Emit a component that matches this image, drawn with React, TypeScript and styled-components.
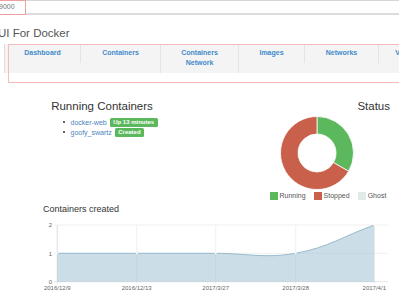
import * as React from 'react';
import styled, { createGlobalStyle } from 'styled-components';

const GlobalStyle = createGlobalStyle`
  html, body {
    margin: 0;
    padding: 0;
    background: #ffffff;
  }
  body {
    font-family: 'Liberation Sans', Arial, sans-serif;
    overflow: hidden;
  }
`;

const Page = styled.div`
  width: 399px;
  height: 300px;
  overflow: hidden;
`;

const AddressBar = styled.div`
  height: 12px;
  border-top: 1px solid #d6d6d6;
  border-bottom: 2px solid #dcdcdc;
  display: flex;
`;

const UrlBox = styled.div`
  box-sizing: border-box;
  margin: -1px 0 0 -1px;
  width: 26.5px;
  height: 15px;
  border: 1px solid #ef9f9f;
  background: #ffffff;
  font-size: 7px;
  line-height: 12px;
  color: #777777;
  text-indent: -1px;
  white-space: nowrap;
  overflow: hidden;
`;

const Title = styled.h1`
  margin: 11px 0 0 -2px;
  font-size: 11.5px;
  line-height: 14px;
  font-weight: normal;
  color: #555555;
`;

const NavSection = styled.div`
  position: relative;
  margin-top: 4px;
  height: 38.5px;
`;

const Highlight = styled.div`
  position: absolute;
  left: 7.5px;
  top: 0;
  right: -10px;
  bottom: 0;
  border: 1.5px solid #f6bcbc;
  pointer-events: none;
`;

const Nav = styled.div`
  margin: 1.5px 0 0 4px;
  height: 29px;
  background: #f4f4f4;
  border-left: 1px solid #e0e0e0;
  display: flex;
  align-items: flex-start;
  overflow: hidden;
`;

const Tab = styled.a<{ $w: number; $tall?: boolean; $plain?: boolean }>`
  box-sizing: border-box;
  flex: none;
  width: ${p => p.$w}px;
  align-self: ${p => (p.$tall ? 'stretch' : 'flex-start')};
  padding: 3.5px 0 5px;
  border-left: ${p => (p.$tall ? '1px solid #e4e4e4' : 'none')};
  border-right: ${p => (p.$plain ? 'none' : '1px solid #e4e4e4')};
  text-align: center;
  font-size: 7px;
  line-height: 10px;
  font-weight: bold;
  color: #428bca;
  white-space: nowrap;
`;

const MainRow = styled.div`
  display: flex;
  margin-top: 16px;
`;

const LeftCol = styled.div`
  width: 204px;
  flex: none;
  text-align: center;
`;

const RightCol = styled.div`
  flex: 1;
  display: flex;
  flex-direction: column;
`;

const Heading = styled.h2<{ $right?: boolean }>`
  margin: 0;
  padding-right: ${p => (p.$right ? '9px' : '0')};
  text-align: ${p => (p.$right ? 'right' : 'center')};
  font-size: 11.5px;
  line-height: 14px;
  font-weight: normal;
  color: #333333;
`;

const List = styled.ul`
  margin: 4.5px 0 0 62.5px;
  padding: 0;
  list-style: none;
  text-align: left;
`;

const Item = styled.li`
  display: flex;
  align-items: center;
  height: 10px;
  font-size: 7px;

  &::before {
    content: '';
    width: 2.5px;
    height: 2.5px;
    border-radius: 50%;
    background: #333333;
    margin-right: 5.5px;
  }
`;

const ContainerLink = styled.a`
  color: #4a84bf;
  text-decoration: none;
`;

const Badge = styled.span`
  margin-left: 3px;
  height: 9px;
  line-height: 9px;
  padding: 0 3.5px;
  background: #5cb85c;
  color: #ffffff;
  font-size: 6px;
  font-weight: bold;
  border-radius: 1.5px;
`;

const Donut = styled.svg`
  display: block;
  margin: 3px 0 0 76px;
`;

const Legend = styled.div`
  display: flex;
  gap: 8.5px;
  margin: 1.5px 0 0 66px;
`;

const LegendItem = styled.span`
  display: flex;
  align-items: center;
  gap: 2px;
  font-size: 7px;
  line-height: 9px;
  color: #555555;
`;

const Swatch = styled.span<{ $color: string }>`
  width: 7.5px;
  height: 8px;
  background: ${p => p.$color};
`;

const ChartTitle = styled.h3`
  margin: 4px 0 0 43px;
  font-size: 9px;
  line-height: 11px;
  font-weight: normal;
  color: #333333;
`;

const Chart = styled.svg`
  display: block;
`;

const tabs = [
  { label: ['Dashboard'], w: 76 },
  { label: ['Containers'], w: 79, plain: true },
  { label: ['Containers', 'Network'], w: 79, tall: true },
  { label: ['Images'], w: 66 },
  { label: ['Networks'], w: 74 },
  { label: ['Volumes'], w: 62 },
];

const containers = [
  { name: 'docker-web', status: 'Up 13 minutes' },
  { name: 'goofy_swartz', status: 'Created' },
];

const statusData = [
  { label: 'Running', value: 1, color: '#5cb85c' },
  { label: 'Stopped', value: 2, color: '#c9604c' },
  { label: 'Ghost', value: 0, color: '#e2eae9' },
];

function segment(cx: number, cy: number, R: number, r: number, a0: number, a1: number) {
  const pt = (rad: number, a: number) => {
    const t = (a * Math.PI) / 180;
    return `${(cx + rad * Math.sin(t)).toFixed(2)},${(cy - rad * Math.cos(t)).toFixed(2)}`;
  };
  const large = a1 - a0 > 180 ? 1 : 0;
  return `M${pt(R, a0)} A${R},${R} 0 ${large} 1 ${pt(R, a1)} L${pt(r, a1)} A${r},${r} 0 ${large} 0 ${pt(r, a0)} Z`;
}

function StatusDonut() {
  const total = statusData.reduce((s, d) => s + d.value, 0);
  let start = 0;
  return (
    <Donut width="74" height="74" viewBox="0 0 74 74">
      {statusData.filter(d => d.value > 0).map(d => {
        const end = start + (d.value / total) * 360;
        const path = segment(37, 37, 36.5, 19, start, end);
        start = end;
        return <path key={d.label} d={path} fill={d.color} stroke="#ffffff" strokeWidth="0.8" />;
      })}
    </Donut>
  );
}

// x positions of the points / y scale, in chart coordinates
const xs = [57.3, 136.7, 215.7, 295.7, 374.3];
const dates = ['2016/12/9', '2016/12/13', '2017/3/27', '2017/3/28', '2017/4/1'];
const yOf = (v: number) => 66.7 - 28.35 * v;

function CreatedChart() {
  const line =
    `M57.3,38.3 L136.7,38.3 L215.7,38.3 ` +
    `C247.5,38.3 264.7,43.8 295.7,38.3 ` +
    `C328.1,32.5 342.9,21.3 374.3,10`;
  const points = [1, 1, 1, 1, 2];
  return (
    <Chart width="399" height="85" viewBox="0 0 399 85">
      {[2, 1].map(v => (
        <line key={v} x1="54" x2="388" y1={yOf(v)} y2={yOf(v)} stroke="#ececec" strokeWidth="0.8" />
      ))}
      {xs.map(x => (
        <line key={x} x1={x} x2={x} y1="10" y2="69.5" stroke="#ececec" strokeWidth="0.8" />
      ))}
      <line x1="57.3" x2="57.3" y1="10" y2="66.7" stroke="#dddddd" strokeWidth="0.8" />
      <line x1="54" x2="388" y1="66.7" y2="66.7" stroke="#dddddd" strokeWidth="0.8" />
      <path d={`${line} L374.3,66.7 L57.3,66.7 Z`} fill="rgba(151,187,205,0.5)" />
      <path d={line} fill="none" stroke="#97bbcd" strokeWidth="1" />
      {xs.map((x, i) => (
        <circle key={x} cx={x} cy={yOf(points[i])} r="1" fill="#ffffff" />
      ))}
      {[2, 1, 0].map(v => (
        <text key={v} x="52" y={yOf(v) + 2.2} fontSize="6" fill="#666666" textAnchor="end"
          fontFamily="'Liberation Sans', Arial, sans-serif">
          {v}
        </text>
      ))}
      {xs.map((x, i) => (
        <text key={x} x={x} y="75" fontSize="6" fill="#666666" textAnchor="middle"
          fontFamily="'Liberation Sans', Arial, sans-serif">
          {dates[i]}
        </text>
      ))}
    </Chart>
  );
}

export default function App() {
  return (
    <Page>
      <GlobalStyle />
      <AddressBar>
        <UrlBox>9000</UrlBox>
      </AddressBar>
      <Title>UI For Docker</Title>
      <NavSection>
        <Nav>
          {tabs.map(t => (
            <Tab key={t.label.join(' ')} $w={t.w} $tall={t.tall} $plain={t.plain}>
              {t.label.map((l, i) => (
                <React.Fragment key={l}>
                  {i > 0 && <br />}
                  {l}
                </React.Fragment>
              ))}
            </Tab>
          ))}
        </Nav>
        <Highlight />
      </NavSection>
      <MainRow>
        <LeftCol>
          <Heading>Running Containers</Heading>
          <List>
            {containers.map(c => (
              <Item key={c.name}>
                <ContainerLink>{c.name}</ContainerLink>
                <Badge>{c.status}</Badge>
              </Item>
            ))}
          </List>
        </LeftCol>
        <RightCol>
          <Heading $right>Status</Heading>
          <StatusDonut />
          <Legend>
            {statusData.map(d => (
              <LegendItem key={d.label}>
                <Swatch $color={d.color} />
                {d.label}
              </LegendItem>
            ))}
          </Legend>
        </RightCol>
      </MainRow>
      <ChartTitle>Containers created</ChartTitle>
      <CreatedChart />
    </Page>
  );
}
